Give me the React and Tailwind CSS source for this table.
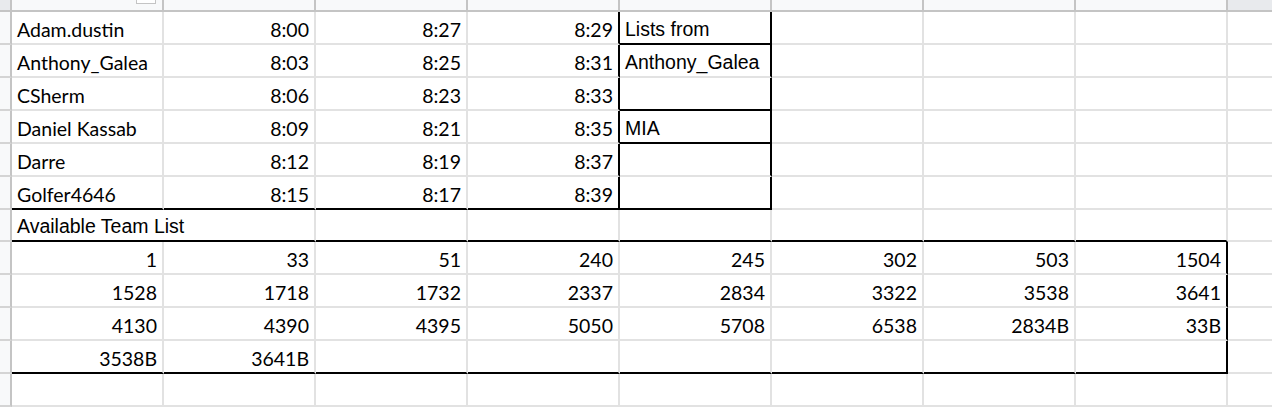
import React from 'react';

const GRID = 'border-r-[#e2e2e2]';
const GRID_B = 'border-b-[#e2e2e2]';

const calibri = "font-['Lato','Open_Sans',sans-serif] text-[19.5px]";
const arial = "font-['Liberation_Sans',Arial,sans-serif] text-[19.5px]";

// each row: cells for columns A..I
const rows = [
  { h: 'h-[33px]', cells: ['Adam.dustin', '8:00', '8:27', '8:29', 'Lists from'] },
  { h: 'h-[33px]', cells: ['Anthony_Galea', '8:03', '8:25', '8:31', 'Anthony_Galea'] },
  { h: 'h-[33px]', cells: ['CSherm', '8:06', '8:23', '8:33', ''] },
  { h: 'h-[33px]', cells: ['Daniel Kassab', '8:09', '8:21', '8:35', 'MIA'] },
  { h: 'h-[33px]', cells: ['Darre', '8:12', '8:19', '8:37', ''] },
  { h: 'h-[33px]', cells: ['Golfer4646', '8:15', '8:17', '8:39', ''] },
  { h: 'h-[32px]', cells: ['Available Team List'] },
  { h: 'h-[33px]', cells: ['1', '33', '51', '240', '245', '302', '503', '1504'] },
  { h: 'h-[33px]', cells: ['1528', '1718', '1732', '2337', '2834', '3322', '3538', '3641'] },
  { h: 'h-[33px]', cells: ['4130', '4390', '4395', '5050', '5708', '6538', '2834B', '33B'] },
  { h: 'h-[33px]', cells: ['3538B', '3641B'] },
  { h: 'h-[33px]', cells: [] },
];

const rightBlack = (r, c) => {
  if (r <= 5 && (c === 3 || c === 4)) return true;
  if (r >= 7 && r <= 10 && c === 7) return true;
  return false;
};

const bottomBlack = (r, c) => {
  if (c === 4 && (r === 0 || r === 2 || r === 3)) return true;
  if (r === 5 && c <= 4) return true;
  if (r === 6 && c <= 7) return true;
  if (r === 10 && c <= 7) return true;
  return false;
};

const Cell = ({ r, c, text }) => {
  const isName = r <= 5 && c === 0;
  const isArial = (r <= 5 && c === 4) || r === 6;
  const left = isName || isArial;
  // the title in A7 spills over into B7, so no gridline there
  const noRight = r === 6 && c === 0;
  const right = noRight ? 'border-r-0 w-[150px]' : rightBlack(r, c) ? 'border-r-2 border-r-black' : `border-r-2 ${GRID}`;
  const bottom = bottomBlack(r, c) ? 'border-b-2 border-b-black' : `border-b-2 ${GRID_B}`;
  return (
    <div
      className={`w-[152px] shrink-0 h-full flex items-end ${left ? 'justify-start pl-[5px]' : 'justify-end pr-[5px]'} ${right} ${bottom} ${isArial ? arial : calibri} pb-[4px] leading-none whitespace-nowrap text-black`}
    >
      {text}
    </div>
  );
};

const App = () => {
  const cols = [0, 1, 2, 3, 4, 5, 6, 7, 8];
  return (
    <div className="w-[1272px] h-[407px] overflow-hidden bg-white">
      <div className="flex h-[12px] bg-[#f8f9fa] border-b-2 border-b-[#c4c4c4]">
        <div className="w-[12px] shrink-0 bg-[#e8eaed] border-r-2 border-r-[#c4c4c4]" />
        {cols.map((c) => (
          <div
            key={c}
            className={`w-[152px] shrink-0 h-full border-r-2 border-r-[#c4c4c4] flex justify-end items-start pr-[6px] ${c === 8 ? 'bg-[#e8eaed]' : ''}`}
          >
            {c === 0 && <div className="w-[20px] h-[4px] border border-t-0 border-[#c4c4c4] bg-white" />}
          </div>
        ))}
      </div>
      {rows.map((row, r) => (
        <div key={r} className={`flex ${row.h}`}>
          <div className="w-[12px] shrink-0 h-full bg-[#f8f9fa] border-r-2 border-r-[#c4c4c4] border-b-2 border-b-[#d4d4d4]" />
          {cols.map((c) => (
            <Cell key={c} r={r} c={c} text={row.cells[c] || ''} />
          ))}
        </div>
      ))}
    </div>
  );
};

export default App;
